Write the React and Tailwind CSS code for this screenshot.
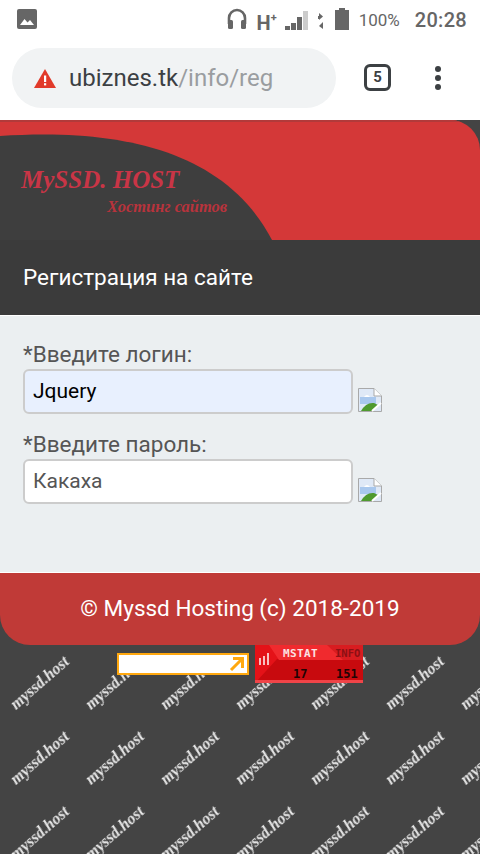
import React from 'react';

const roboto = { fontFamily: 'Roboto, sans-serif' };

function StatusBar() {
  return (
    <div className="h-10 flex items-center pl-[17px] pr-[13px] bg-white text-[#666]">
      <svg width="20" height="20" viewBox="0 0 20 20" className="mb-[3px]">
        <rect width="20" height="20" rx="2" fill="#666" />
        <path d="M3 16 L7.5 10 L10.5 13.5 L13 11 L17 16 Z" fill="#fff" />
      </svg>
      <div className="ml-auto flex items-center">
        <svg width="20" height="22" viewBox="0 0 20 22" className="mb-[3px]">
          <path d="M2 16 V10 a8 8 0 0 1 16 0 V16" fill="none" stroke="#666" strokeWidth="2.6" />
          <rect x="1" y="12" width="5" height="9" rx="1.5" fill="#666" />
          <rect x="14" y="12" width="5" height="9" rx="1.5" fill="#666" />
        </svg>
        <span className="ml-[10px] mt-[5px] text-[20px] font-bold leading-none" style={roboto}>H</span>
        <span className="mb-[5px] text-[11px] font-bold leading-none" style={roboto}>+</span>
        <svg width="23" height="20" viewBox="0 0 23 20" className="ml-[8px] mt-[2px]">
          <rect x="0" y="15" width="5" height="4" fill="#666" />
          <rect x="6" y="12" width="5" height="7" fill="#666" />
          <rect x="12" y="6" width="5" height="13" fill="#666" />
          <rect x="18" y="0" width="5" height="19" fill="#ccc" />
        </svg>
        <svg width="6" height="20" viewBox="0 0 6 20" className="ml-[10px] mt-[1px]">
          <path d="M1 2 L5 5.5 L1 9 Z" fill="#666" />
          <path d="M5 11 L1 15 L5 18 Z" fill="#666" />
          <rect x="0" y="5" width="2" height="3" fill="#666" />
        </svg>
        <svg width="14" height="22" viewBox="0 0 14 22" className="ml-[11px] mb-[3px]">
          <path d="M4 0 H10 V2 H14 V22 H0 V2 H4 Z" fill="#666" />
        </svg>
        <span className="ml-[10px] text-[17px] leading-none" style={roboto}>100%</span>
        <span className="ml-[15px] text-[20px] font-medium leading-none tracking-[0.3px]" style={roboto}>20:28</span>
      </div>
    </div>
  );
}

function BrowserBar() {
  return (
    <div className="h-20 flex items-start pt-2 pl-3 bg-white">
      <div className="w-[324px] h-[60px] rounded-full bg-[#f1f3f4] flex items-center pl-[22px]">
        <svg width="22" height="19" viewBox="0 0 22 19">
          <path d="M11 0 L22 19 H0 Z" fill="#e13a2a" />
          <rect x="10" y="6.5" width="2.2" height="6.5" fill="#fff" />
          <rect x="10" y="14.2" width="2.2" height="2.2" fill="#fff" />
        </svg>
        <span className="ml-[13px] text-[24px] leading-none" style={roboto}>
          <span className="text-[#3c4043]">ubiznes.tk</span>
          <span className="text-[#9a9da0]">/info/reg</span>
        </span>
      </div>
      <div className="ml-[28px] mt-4 w-[27px] h-[27px] border-[3px] border-[#3c4043] rounded-[6px] flex items-center justify-center text-[15px] font-bold text-[#3c4043]" style={roboto}>
        5
      </div>
      <div className="ml-[44px] mt-[18px] flex flex-col gap-[3px]">
        <span className="w-[6px] h-[6px] rounded-full bg-[#3c4043]" />
        <span className="w-[6px] h-[6px] rounded-full bg-[#3c4043]" />
        <span className="w-[6px] h-[6px] rounded-full bg-[#3c4043]" />
      </div>
    </div>
  );
}

function Banner() {
  return (
    <div className="h-[120px] bg-[#d43838] rounded-tr-[30px] overflow-hidden">
      <svg width="480" height="120" viewBox="0 0 480 120" className="block">
        <rect width="480" height="2" fill="#b23a3a" />
        <path d="M0 16 C120 8 225 30 272 120 L0 120 Z" fill="#3e3e3e" />
        <text x="21" y="68" fill="#c93546" fontSize="25" fontWeight="bold" fontStyle="italic" fontFamily="'Liberation Serif', serif">MySSD. HOST</text>
        <text x="107" y="92" fill="#b8333c" fontSize="16.5" fontWeight="bold" fontStyle="italic" fontFamily="'Liberation Serif', serif">Хостинг сайтов</text>
      </svg>
    </div>
  );
}

function BrokenImage() {
  return (
    <svg width="24" height="24" viewBox="0 0 24 24" className="ml-[5px] mb-[2px] self-end">
      <path d="M0.5 0.5 H16 L23.5 8 V23.5 H0.5 Z" fill="#dfe9f7" stroke="#a9a9a9" />
      <path d="M16 0.5 V8 H23.5" fill="#fff" stroke="#a9a9a9" />
      <path d="M2 9 H18 V16 H2 Z" fill="#a9c8ee" />
      <path d="M6 9 Q9 5 12 9 Z" fill="#fff" />
      <path d="M3 23 Q8 14 16 15 L20 17 L14 23 Z" fill="#4f9a2f" />
      <path d="M14 23 L23 15" stroke="#fff" strokeWidth="2" />
    </svg>
  );
}

function Field({ label, value, filled }) {
  return (
    <div>
      <div className="text-[22.5px] leading-[24px] text-[#555]" style={roboto}>{label}</div>
      <div className="flex mt-[3px]">
        <div className={`w-[330px] h-[45px] border-2 border-[#ccc] rounded-[6px] pl-2 flex items-center text-[21px] ${filled ? 'bg-[#e8f0fe] text-black' : 'bg-white text-[#555]'}`} style={roboto}>
          {value}
        </div>
        <BrokenImage />
      </div>
    </div>
  );
}

function Watermarks() {
  const tiles = Array.from({ length: 21 });
  return (
    <div className="grid grid-cols-[repeat(7,75px)] auto-rows-[75px] pl-[2px] w-[530px]">
      {tiles.map((_, i) => (
        <div key={i} className="flex items-center justify-center">
          <span className="-rotate-[41deg] whitespace-nowrap text-[16px] font-bold italic text-[#e8e8e8] blur-[0.5px]" style={{ fontFamily: "'Liberation Serif', serif" }}>
            myssd.host
          </span>
        </div>
      ))}
    </div>
  );
}

function Counters() {
  return (
    <div className="absolute left-[117px] top-2 flex items-start">
      <div className="w-[132px] h-[22px] bg-white border-2 border-[#ffa80f] flex items-center justify-end pr-[2px]">
        <svg width="16" height="16" viewBox="0 0 16 16">
          <path d="M2 14 L13 3 M4 2.5 H13.5 V12" fill="none" stroke="#ffa80f" strokeWidth="3" />
        </svg>
      </div>
      <svg width="108" height="38" viewBox="0 0 108 38" className="ml-[6px] -mt-2 block">
        <rect width="108" height="38" fill="#e41218" />
        <path d="M0 38 L22 14 H108 V38 Z" fill="#c80a0e" />
        <path d="M14 0 H78 L94 15 H24 Z" fill="#f02a2e" />
        <path d="M72 0 H108 V15 H88 Z" fill="#d81c20" />
        <rect x="0" y="35" width="108" height="3" fill="#f04448" />
        <rect x="4" y="13" width="2" height="7" fill="#f8c0c0" />
        <rect x="8" y="11" width="2" height="9" fill="#f8c0c0" />
        <rect x="12" y="8" width="2" height="12" fill="#f8c0c0" />
        <text x="28" y="12" fill="#fbe3e3" fontSize="11" fontWeight="bold" fontFamily="'DejaVu Sans Mono', monospace" letterSpacing="0.4">MSTAT</text>
        <text x="80" y="12" fill="#8c1014" fontSize="10.5" fontWeight="bold" fontFamily="'DejaVu Sans Mono', monospace">INFO</text>
        <text x="38" y="33" fill="#200404" fontSize="12" fontWeight="bold" fontFamily="'DejaVu Sans Mono', monospace">17</text>
        <text x="81" y="33" fill="#200404" fontSize="12" fontWeight="bold" fontFamily="'DejaVu Sans Mono', monospace">151</text>
      </svg>
    </div>
  );
}

export default function App() {
  return (
    <div className="w-[480px] h-[854px] overflow-hidden bg-[#444444]">
      <StatusBar />
      <BrowserBar />
      <Banner />
      <div className="h-[75px] bg-[#3b3b3b] flex items-center pl-[23px] text-[22.5px] text-white" style={roboto}>
        Регистрация на сайте
      </div>
      <div className="h-[258px] bg-[#ebeff1] border-y border-white pt-[26px] pl-[23px] flex flex-col gap-[18px] box-border">
        <Field label="*Введите логин:" value="Jquery" filled />
        <Field label="*Введите пароль:" value="Какаха" />
      </div>
      <div className="h-[72px] bg-[#c03a37] rounded-b-[30px] flex items-center justify-center text-[22.5px] text-white" style={roboto}>
        © Myssd Hosting (c) 2018-2019
      </div>
      <div className="relative">
        <Watermarks />
        <Counters />
      </div>
    </div>
  );
}
